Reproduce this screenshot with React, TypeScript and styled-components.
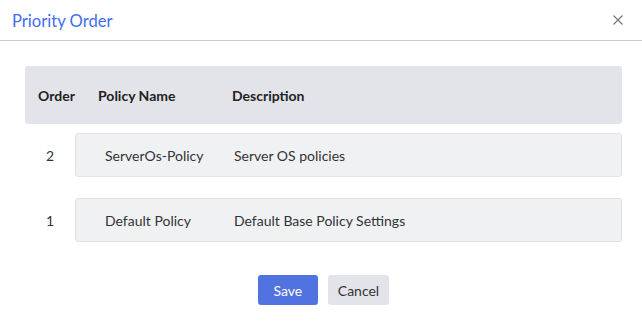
import React from 'react';
import styled, { createGlobalStyle } from 'styled-components';

const GlobalStyle = createGlobalStyle`
  html, body {
    margin: 0;
    padding: 0;
    background: #ffffff;
    font-family: Lato, 'Open Sans', sans-serif;
  }
`;

type Policy = { order: number; name: string; description: string };

const policies: Policy[] = [
  { order: 2, name: 'ServerOs-Policy', description: 'Server OS policies' },
  { order: 1, name: 'Default Policy', description: 'Default Base Policy Settings' },
];

const Dialog = styled.div`
  width: 642px;
  height: 323px;
  background: #fff;
`;

const Header = styled.div`
  height: 40px;
  display: flex;
  align-items: center;
  justify-content: space-between;
  padding: 0 17px 0 12px;
  border-bottom: 1px solid #c9c9ce;
`;

const Title = styled.h2`
  margin: 2px 0 0;
  font-size: 16.6px;
  font-weight: 400;
  color: #3f6ef0;
`;

const CloseButton = styled.button`
  border: 0;
  background: none;
  padding: 0;
  width: 14px;
  height: 14px;
  display: flex;
  align-items: center;
  justify-content: center;
  cursor: pointer;
`;

const Body = styled.div`
  padding: 25px 20px 0 25px;
`;

const HeadRow = styled.div`
  height: 58px;
  display: flex;
  align-items: center;
  background: #e3e4e9;
  border-radius: 3px;
  font-size: 14px;
  font-weight: 700;
  color: #222;
`;

const HeadCell = styled.div<{ $width: number; $pad?: number }>`
  width: ${(p) => p.$width}px;
  padding-left: ${(p) => p.$pad ?? 0}px;
  box-sizing: border-box;
`;

const Rows = styled.div`
  display: flex;
  flex-direction: column;
  gap: 21px;
  margin-top: 9px;
`;

const Row = styled.div`
  display: flex;
  align-items: center;
`;

const OrderCell = styled.div`
  width: 50px;
  text-align: center;
  font-size: 14px;
  color: #333;
`;

const RowBox = styled.div`
  flex: 1;
  height: 44px;
  box-sizing: border-box;
  display: flex;
  align-items: center;
  background: #f0f1f3;
  border: 1px solid #e1e2e6;
  border-radius: 3px;
  font-size: 14px;
  color: #333;
`;

const NameCell = styled.div`
  width: 158px;
  padding-left: 29px;
  box-sizing: border-box;
  white-space: nowrap;
`;

const Footer = styled.div`
  display: flex;
  justify-content: center;
  gap: 10px;
  margin-top: 33px;
`;

const Button = styled.button<{ $primary?: boolean }>`
  height: 30px;
  min-width: 60px;
  padding: 0 10px;
  border: 0;
  border-radius: 3px;
  font-family: Lato, sans-serif;
  font-size: 14px;
  background: ${(p) => (p.$primary ? '#5173e0' : '#e3e4e9')};
  color: ${(p) => (p.$primary ? '#fff' : '#333')};
  cursor: pointer;
`;

export default function App() {
  return (
    <Dialog>
      <GlobalStyle />
      <Header>
        <Title>Priority Order</Title>
        <CloseButton aria-label="close">
          <svg width="10" height="10" viewBox="0 0 10 10">
            <path d="M0.5 0.5L9.5 9.5M9.5 0.5L0.5 9.5" stroke="#777" strokeWidth="1.2" />
          </svg>
        </CloseButton>
      </Header>
      <Body>
        <HeadRow>
          <HeadCell $width={73} $pad={13}>Order</HeadCell>
          <HeadCell $width={134}>Policy Name</HeadCell>
          <HeadCell $width={200}>Description</HeadCell>
        </HeadRow>
        <Rows>
          {policies.map((p) => (
            <Row key={p.name}>
              <OrderCell>{p.order}</OrderCell>
              <RowBox>
                <NameCell>{p.name}</NameCell>
                <div>{p.description}</div>
              </RowBox>
            </Row>
          ))}
        </Rows>
        <Footer>
          <Button $primary>Save</Button>
          <Button>Cancel</Button>
        </Footer>
      </Body>
    </Dialog>
  );
}
